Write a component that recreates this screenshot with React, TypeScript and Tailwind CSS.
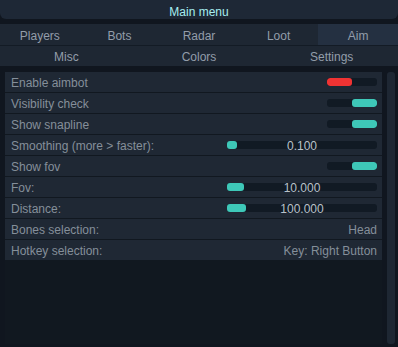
import React from 'react'

type Row =
  | { label: string; kind: 'toggle'; on: boolean }
  | { label: string; kind: 'slider'; fill: number; value: string }
  | { label: string; kind: 'text'; value: string }

const rows: Row[] = [
  { label: 'Enable aimbot', kind: 'toggle', on: false },
  { label: 'Visibility check', kind: 'toggle', on: true },
  { label: 'Show snapline', kind: 'toggle', on: true },
  { label: 'Smoothing (more > faster):', kind: 'slider', fill: 10, value: '0.100' },
  { label: 'Show fov', kind: 'toggle', on: true },
  { label: 'Fov:', kind: 'slider', fill: 17, value: '10.000' },
  { label: 'Distance:', kind: 'slider', fill: 19, value: '100.000' },
  { label: 'Bones selection:', kind: 'text', value: 'Head' },
  { label: 'Hotkey selection:', kind: 'text', value: 'Key: Right Button' },
]

const tabs = ['Players', 'Bots', 'Radar', 'Loot', 'Aim']
const tabs2 = ['Misc', 'Colors', 'Settings']

function Toggle({ on }: { on: boolean }) {
  return (
    <div className="flex w-[50px] h-[8px] rounded-[3px] bg-[#111a24] overflow-hidden">
      {on ? (
        <div className="ml-auto w-[25px] h-full rounded-[3px] bg-[#3ec8b8]" />
      ) : (
        <div className="w-[25px] h-full rounded-[3px] bg-[#f03333]" />
      )}
    </div>
  )
}

function Slider({ fill, value }: { fill: number; value: string }) {
  return (
    <div className="relative w-[150px] h-[8px] rounded-[3px] bg-[#111a24]">
      <div className="h-full rounded-[3px] bg-[#3ec8b8]" style={{ width: fill }} />
      <span className="absolute inset-0 flex items-center justify-center pt-[1px] text-[12px] text-[#b9c1c9] leading-none">
        {value}
      </span>
    </div>
  )
}

export default function App() {
  return (
    <div className="w-[398px] h-[347px] bg-[#10161f] overflow-hidden font-['Liberation_Sans',Arial,sans-serif] text-[12px]">
      <div className="h-[19px] pt-[5px] bg-[#1e2836] rounded-b-[6px] flex items-center justify-center text-[#a6eef0]">
        Main menu
      </div>

      <div className="mt-[5px] grid grid-cols-5 h-[22px] bg-[#1e2733] border-b border-[#131b25] text-[#939daa]">
        {tabs.map((t) => (
          <div
            key={t}
            className={`flex items-center justify-center pt-[2px] ${t === 'Aim' ? 'bg-[#243041]' : ''}`}
          >
            {t}
          </div>
        ))}
      </div>
      <div className="grid grid-cols-3 h-[20px] bg-[#1e2733] text-[#939daa]">
        {tabs2.map((t) => (
          <div key={t} className="flex items-center justify-center pt-[2px]">
            {t}
          </div>
        ))}
      </div>

      <div className="flex mt-[6px]">
        <div className="ml-[5px] w-[377px] flex flex-col gap-px bg-[#111820]">
          {rows.map((r) => (
            <div
              key={r.label}
              className="h-[20px] flex items-center justify-between pl-[6px] pr-[5px] bg-[#1f2834] text-[#858f9a]"
            >
              <span className="pt-[2px]">{r.label}</span>
              {r.kind === 'toggle' && <Toggle on={r.on} />}
              {r.kind === 'slider' && <Slider fill={r.fill} value={r.value} />}
              {r.kind === 'text' && <span className="pt-[2px] text-[#858f9a]">{r.value}</span>}
            </div>
          ))}
        </div>
        <div className="ml-[5px] w-[8px] h-[272px] rounded-[3px] bg-[#1e2733]" />
      </div>
    </div>
  )
}
